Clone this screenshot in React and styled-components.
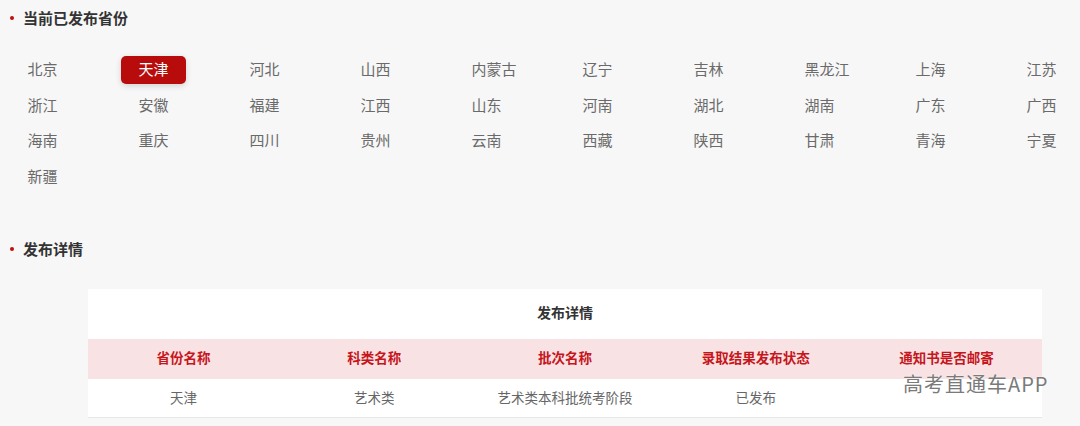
import React from 'react';
import styled, { createGlobalStyle } from 'styled-components';

const GlobalStyle = createGlobalStyle`
  body {
    margin: 0;
    background: #f7f7f7;
    font-family: "Noto Sans CJK SC", "Noto Sans", sans-serif;
  }
`;

const Page = styled.div`
  position: relative;
  width: 1080px;
  height: 426px;
  overflow: hidden;
  padding-top: 8px;
  box-sizing: border-box;
`;

const SectionTitle = styled.h3`
  margin: ${p => p.$top || 0}px 0 0;
  padding-left: 23px;
  position: relative;
  font-size: 15px;
  line-height: 20px;
  font-weight: 700;
  color: #333;

  &::before {
    content: '';
    position: absolute;
    left: 10px;
    top: 8px;
    width: 4px;
    height: 4px;
    border-radius: 50%;
    background: #c00d0d;
  }
`;

const ProvinceGrid = styled.div`
  display: grid;
  grid-template-columns: repeat(10, 111px);
  row-gap: 7.5px;
  padding-left: 10px;
  margin-top: 28px;
`;

const Province = styled.div`
  justify-self: start;
  height: 28px;
  box-sizing: border-box;
  padding: 0 17.5px 3px;
  display: flex;
  align-items: center;
  font-size: 15px;
  border-radius: 5px;
  color: ${p => (p.$active ? '#fff' : '#6a6a6a')};
  background: ${p => (p.$active ? '#b80c0c' : 'transparent')};
  box-shadow: ${p => (p.$active ? '0 2px 6px rgba(0,0,0,0.15)' : 'none')};
`;

const Table = styled.div`
  margin: 30px 0 0 88px;
  width: 954px;
  background: #fff;
`;

const TableCaption = styled.div`
  height: 50px;
  box-sizing: border-box;
  padding-bottom: 4px;
  display: flex;
  align-items: center;
  justify-content: center;
  font-size: 14px;
  font-weight: 700;
  color: #333;
`;

const Row = styled.div`
  display: grid;
  grid-template-columns: repeat(5, 1fr);
  height: ${p => (p.$head ? 40 : 38)}px;
  background: ${p => (p.$head ? '#f9e2e4' : '#fff')};
  border-bottom: ${p => (p.$head ? 'none' : '1px solid #e6e6e6')};
`;

const Cell = styled.div`
  display: flex;
  align-items: center;
  justify-content: center;
  padding-bottom: ${p => (p.$head ? 4 : 2)}px;
  font-size: 13.5px;
  font-weight: ${p => (p.$head ? 700 : 400)};
  color: ${p => (p.$head ? '#c5161c' : '#666')};
`;

const Watermark = styled.div`
  position: absolute;
  left: 903px;
  top: 371px;
  font-size: 20px;
  line-height: 26px;
  color: #7a7a7a;
  text-shadow: 0 0 2px rgba(255, 255, 255, 0.9);
  letter-spacing: 1px;
`;

const provinces = [
  '北京', '天津', '河北', '山西', '内蒙古', '辽宁', '吉林', '黑龙江', '上海', '江苏',
  '浙江', '安徽', '福建', '江西', '山东', '河南', '湖北', '湖南', '广东', '广西',
  '海南', '重庆', '四川', '贵州', '云南', '西藏', '陕西', '甘肃', '青海', '宁夏',
  '新疆',
];

const headers = ['省份名称', '科类名称', '批次名称', '录取结果发布状态', '通知书是否邮寄'];
const rows = [['天津', '艺术类', '艺术类本科批统考阶段', '已发布', '']];

export default function App() {
  return (
    <Page>
      <GlobalStyle />
      <SectionTitle>当前已发布省份</SectionTitle>
      <ProvinceGrid>
        {provinces.map(name => (
          <Province key={name} $active={name === '天津'}>{name}</Province>
        ))}
      </ProvinceGrid>

      <SectionTitle $top={48}>发布详情</SectionTitle>
      <Table>
        <TableCaption>发布详情</TableCaption>
        <Row $head>
          {headers.map(h => <Cell key={h} $head>{h}</Cell>)}
        </Row>
        {rows.map((r, i) => (
          <Row key={i}>
            {r.map((c, j) => <Cell key={j}>{c}</Cell>)}
          </Row>
        ))}
      </Table>
      <Watermark>高考直通车APP</Watermark>
    </Page>
  );
}
